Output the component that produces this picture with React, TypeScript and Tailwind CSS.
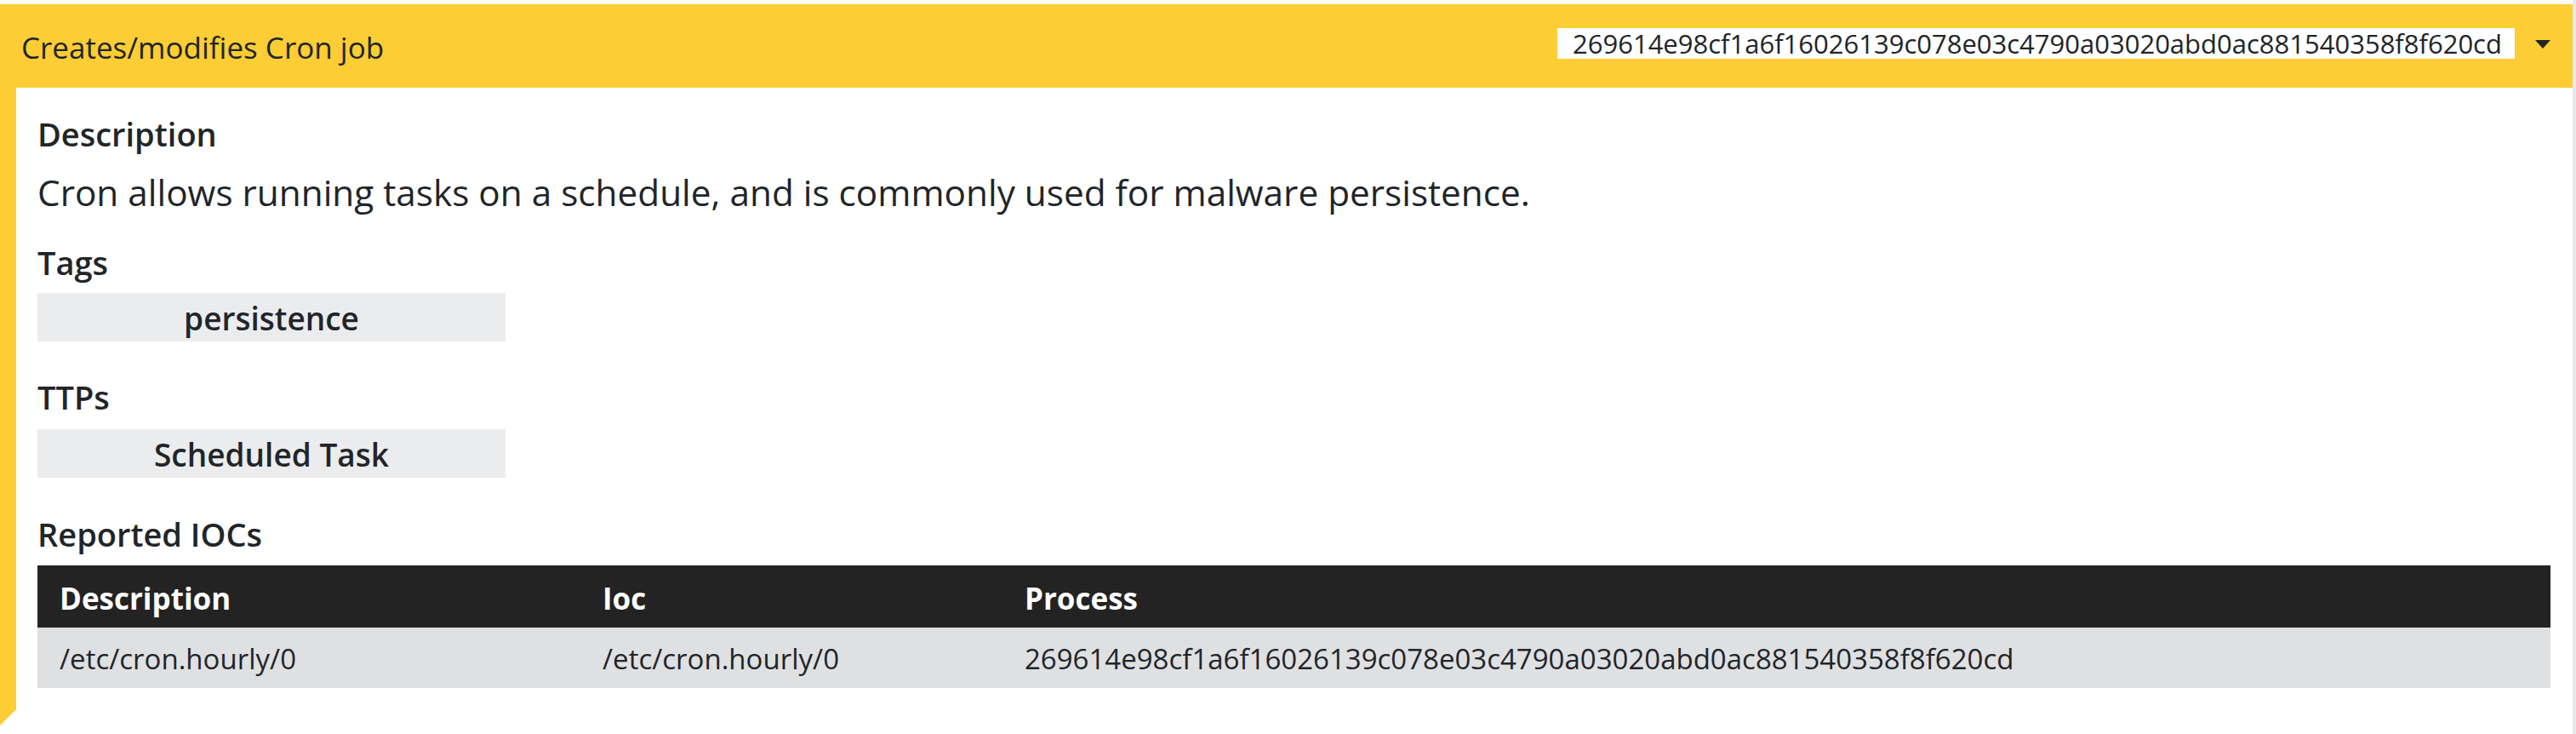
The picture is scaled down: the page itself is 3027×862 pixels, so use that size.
const HASH = "269614e98cf1a6f16026139c078e03c4790a03020abd0ac881540358f8f620cd";

function Label({ children, className = "" }: { children: React.ReactNode; className?: string }) {
  return <div className={"text-[38px] font-semibold leading-[44px] " + className}>{children}</div>;
}

function Chip({ children, className = "" }: { children: React.ReactNode; className?: string }) {
  return (
    <div
      className={
        "flex h-[57px] w-[550px] items-center justify-center bg-[#ebecee] pt-[3px] text-[37px] font-semibold leading-[44px] " +
        className
      }
    >
      {children}
    </div>
  );
}

export default function App() {
  return (
    <div className="flex h-[862px] w-[3027px] bg-white font-['Open_Sans',sans-serif] text-[#212529]">
      <div className="flex-1 pt-[5px]">
        <div className="flex h-[98px] items-center justify-between bg-[#fccd34] pl-[25px] pr-[26px]">
          <span className="mt-[4px] whitespace-nowrap text-[35px] leading-[40px]">Creates/modifies Cron job</span>
          <div className="mb-[6px] flex items-center gap-[24px]">
            <div className="h-[36px] w-[1125px] whitespace-nowrap bg-white pl-[18px] text-[31px] leading-[36px]">
              {HASH}
            </div>
            <svg width="18" height="10" viewBox="0 0 18 10" className="mt-[2px]">
              <polygon points="0,0 18,0 9,10" fill="#212529" />
            </svg>
          </div>
        </div>
        <div className="border-b-[19px] border-l-[19px] border-b-white border-l-[#fccd34] pb-[25px] pl-[25px] pr-[26px] pt-[32px]">
          <Label>Description</Label>
          <div className="mt-[19px] whitespace-nowrap text-[42.3px] leading-[56px]">
            Cron allows running tasks on a schedule, and is commonly used for malware persistence.
          </div>
          <Label className="mt-[32px]">Tags</Label>
          <Chip className="mt-[14px]">persistence</Chip>
          <Label className="mt-[43px]">TTPs</Label>
          <Chip className="mt-[16px]">Scheduled Task</Chip>
          <Label className="mt-[44px]">Reported IOCs</Label>
          <div className="mt-[15px]">
            <div className="grid h-[73px] grid-cols-[638px_496px_1fr] items-center bg-[#232323] pt-[5px] text-[35px] font-bold leading-[40px] text-white">
              <div className="pl-[26px]">Description</div>
              <div className="pl-[26px]">Ioc</div>
              <div className="pl-[26px]">Process</div>
            </div>
            <div className="grid h-[71px] grid-cols-[638px_496px_1fr] items-center bg-[#dfe0e2] pt-[3px] text-[33px] leading-[40px]">
              <div className="pl-[26px]">/etc/cron.hourly/0</div>
              <div className="pl-[26px]">/etc/cron.hourly/0</div>
              <div className="whitespace-nowrap pl-[26px]">{HASH}</div>
            </div>
          </div>
        </div>
      </div>
      <div className="w-[4px] bg-[#e8e9eb]" />
    </div>
  );
}
